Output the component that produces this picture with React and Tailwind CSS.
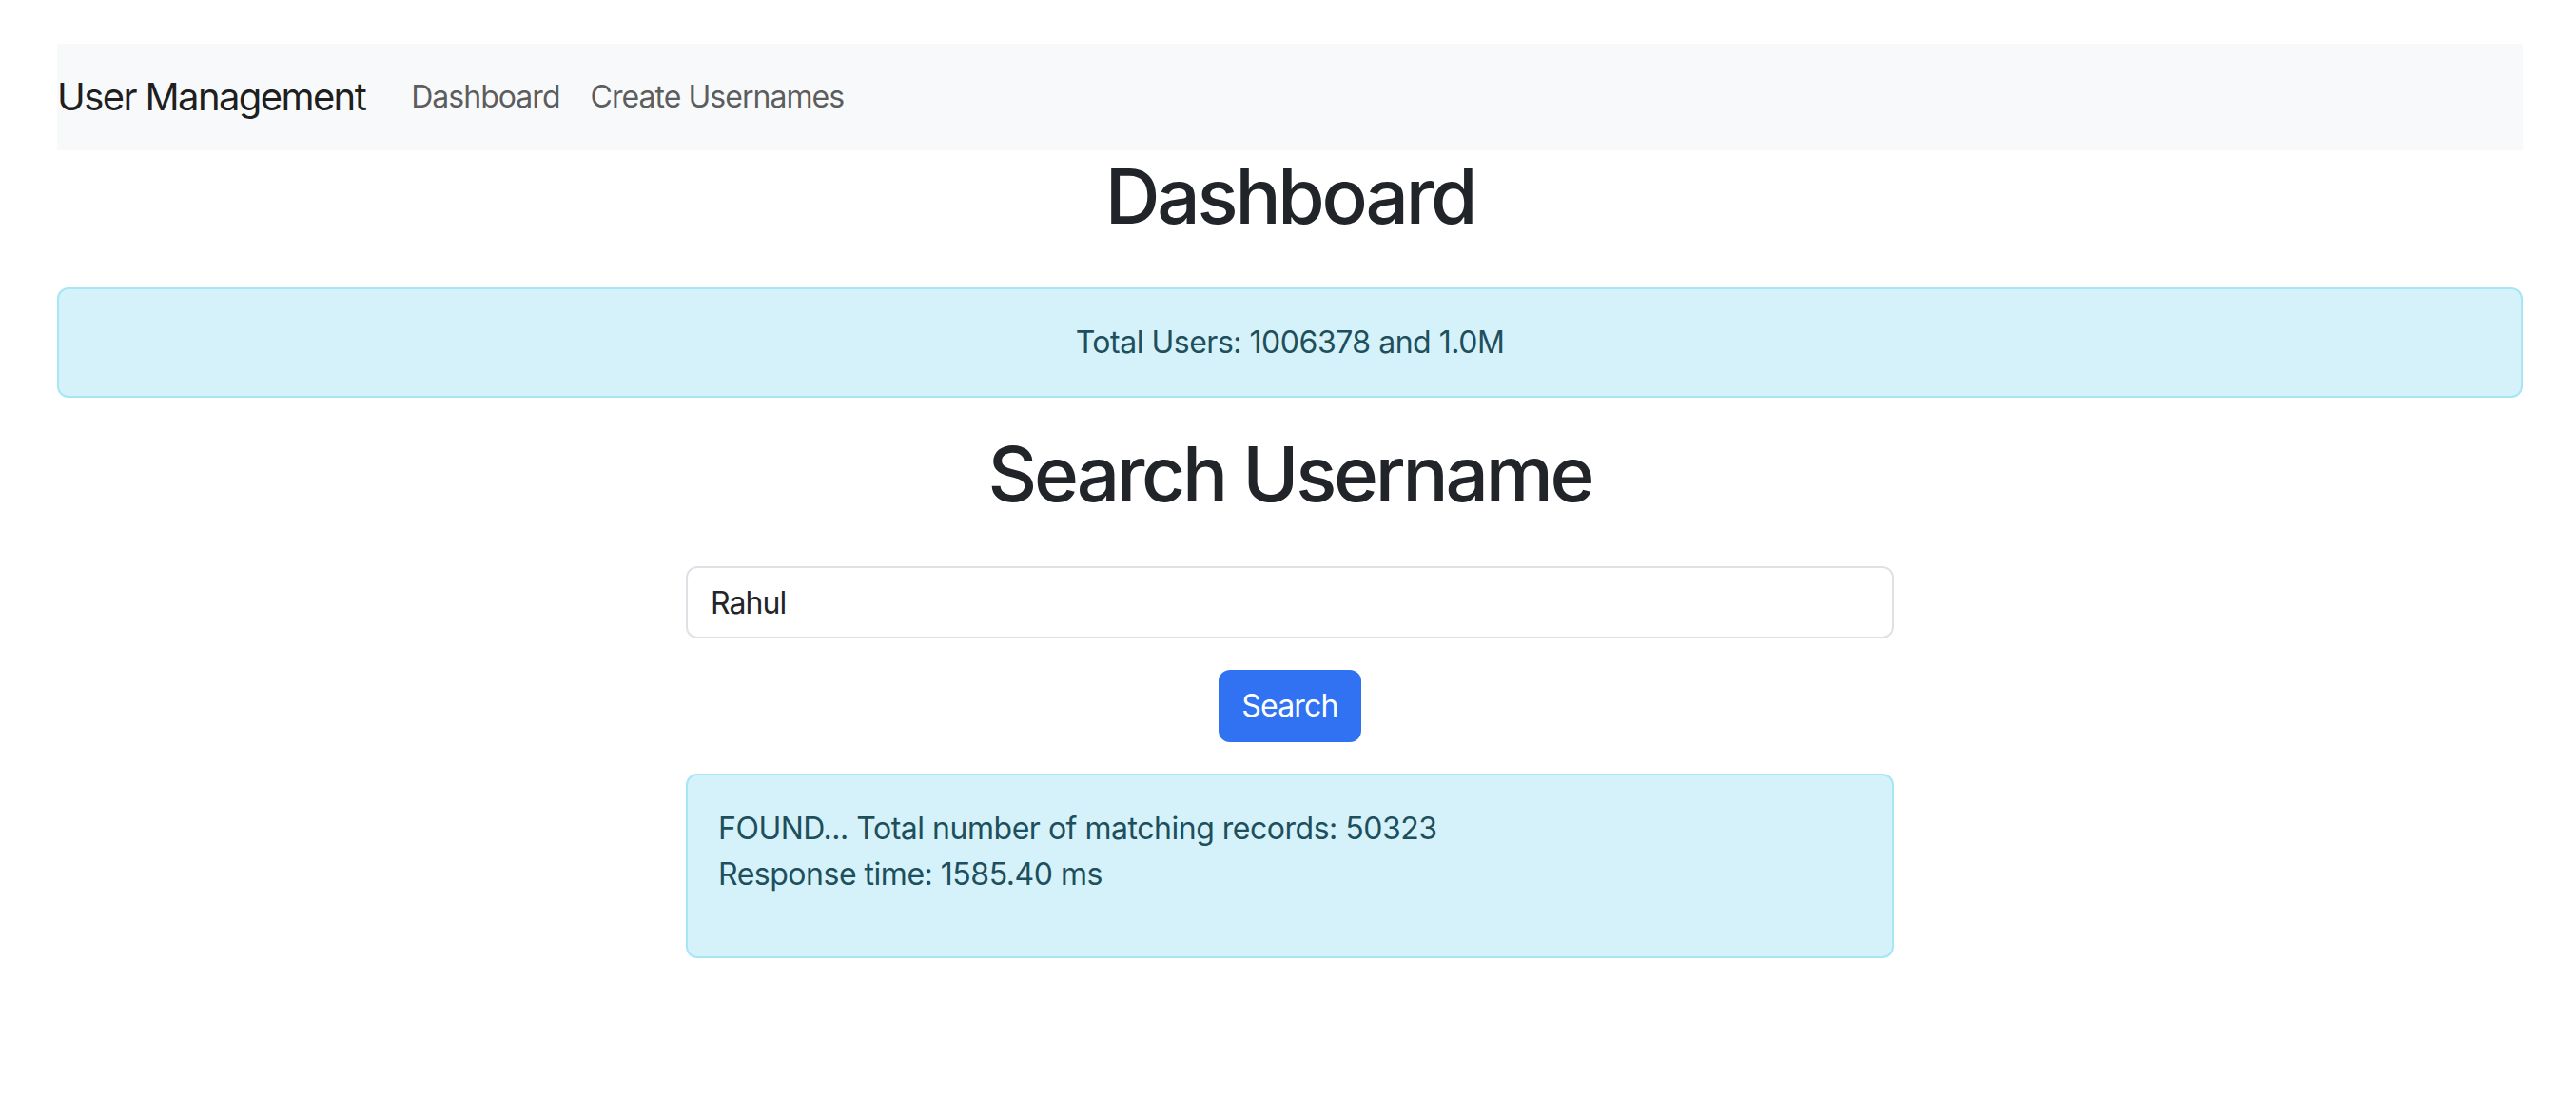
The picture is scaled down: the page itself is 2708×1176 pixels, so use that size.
import { useState } from "react";

const font = { fontFamily: "Inter, 'Liberation Sans', sans-serif" };

export default function App() {
  const [nome, setNome] = useState("Rahul");

  return (
    <div className="flex min-h-[1176px] flex-col bg-white pl-[60px] pr-[56px] pt-[46px] tracking-[-0.03em]" style={font}>
      <nav className="flex h-[112px] items-center bg-[#f8f9fa]">
        <a className="mr-[32px] text-[40px] leading-[60px] tracking-[-0.04em] text-black/90">User Management</a>
        <div className="flex items-center">
          <a className="px-[16px] text-[32px] leading-[48px] tracking-[-0.03em] text-black/65">Dashboard</a>
          <a className="px-[16px] text-[32px] leading-[48px] tracking-[-0.03em] text-black/65">Create Usernames</a>
        </div>
      </nav>

      <h1 className="mb-[16px] text-center text-[80px] font-medium leading-[96px] tracking-[-0.04em] text-[#212529]">
        Dashboard
      </h1>

      <div className="mt-[32px] rounded-[12px] border-2 border-[#a6e6f5] bg-[#d5f2fa] p-[32px] text-center text-[32px] leading-[48px] text-[#1e4f5c]">
        Total Users: 1006378 and 1.0M
      </div>

      <h1 className="mt-[32px] mb-[16px] text-center text-[80px] font-medium leading-[96px] tracking-[-0.04em] text-[#212529]">
        Search Username
      </h1>

      <div className="mx-auto mt-[33px] flex w-[1270px] flex-col">
        <input
          className="block h-[76px] w-full rounded-[12px] border-2 border-[#dee2e6] px-[24px] text-[32px] tracking-[-0.03em] text-[#212529] outline-none"
          value={nome}
          onChange={(e) => setNome(e.target.value)}
        />
        <div className="mt-[33px] flex justify-center">
          <button className="h-[76px] rounded-[12px] bg-[#3072f1] px-[24px] text-[32px] tracking-[-0.025em] text-white">
            Search
          </button>
        </div>
        <div className="mt-[33px] rounded-[12px] border-2 border-[#a6e6f5] bg-[#d5f2fa] px-[32px] pt-[32px] pb-[30px] text-[32px] leading-[48px] text-[#1e4f5c]">
          <p className="mb-[32px]">
            FOUND... Total number of matching records: 50323
            <br />
            Response time: 1585.40 ms
          </p>
        </div>
      </div>
    </div>
  );
}
